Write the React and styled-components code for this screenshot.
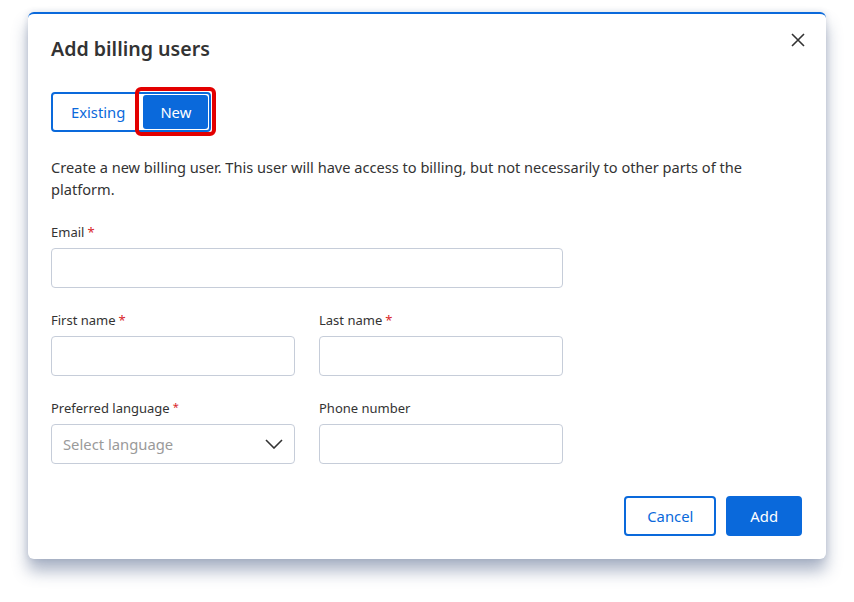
import React from "react";
import styled, { createGlobalStyle } from "styled-components";

const Global = createGlobalStyle`
  html, body { margin: 0; padding: 0; background: #ffffff; }
  body { font-family: "Noto Sans", "Open Sans", sans-serif; color: #333333; }
  * { box-sizing: border-box; }
`;

const BLUE = "#0a69db";

const Page = styled.div`
  padding: 12px 28px 40px 28px;
`;

const Modal = styled.div`
  position: relative;
  width: 798px;
  background: #fff;
  border-top: 2px solid ${BLUE};
  border-radius: 6px;
  box-shadow: 0 12px 16px rgba(70, 90, 130, 0.45), 0 0 6px rgba(70, 90, 130, 0.18);
  padding: 20px 24px 23px 23px;
  display: flex;
  flex-direction: column;
`;

const Title = styled.h2`
  margin: 0;
  font-size: 19.6px;
  line-height: 30px;
  font-weight: 600;
  color: #333;
`;

const CloseButton = styled.button`
  position: absolute;
  top: 17px;
  right: 19px;
  width: 18px;
  height: 18px;
  padding: 0;
  border: none;
  background: none;
  display: flex;
  align-items: center;
  justify-content: center;
`;

const ToggleGroup = styled.div`
  margin-top: 28px;
  align-self: flex-start;
  display: flex;
  padding: 1px;
  border: 2px solid ${BLUE};
  border-radius: 4px;
`;

const ToggleButton = styled.button`
  position: relative;
  height: 34px;
  padding: 0 17px;
  margin-left: ${(p) => (p.$active ? 1 : 0)}px;
  border: none;
  border-radius: 3px;
  background: ${(p) => (p.$active ? BLUE : "#fff")};
  color: ${(p) => (p.$active ? "#fff" : BLUE)};
  font-family: inherit;
  font-size: 14.8px;
  ${(p) =>
    p.$focused &&
    `
    &::after {
      content: "";
      position: absolute;
      inset: -8px -8px -7px -8px;
      border: 4px solid #e30000;
      border-radius: 6px;
    }
  `}
`;

const Description = styled.p`
  margin: 24px 0 0 0;
  font-size: 14.6px;
  line-height: 22px;
  color: #333;
  max-width: 752px;
`;

const FormGrid = styled.div`
  margin-top: 22px;
  width: 512px;
  display: grid;
  grid-template-columns: 244px 244px;
  column-gap: 24px;
  row-gap: 22px;
`;

const Field = styled.div`
  display: flex;
  flex-direction: column;
  grid-column: ${(p) => (p.$full ? "1 / span 2" : "auto")};
`;

const Label = styled.label`
  font-size: 13px;
  line-height: 20px;
  height: 20px;
  color: #333;
  margin-bottom: 6px;
`;

const Req = styled.span`
  color: #d9252b;
  font-size: ${(p) => (p.$small ? "11px" : "13px")};
  line-height: 0;
  position: relative;
  top: ${(p) => (p.$small ? "-2px" : "0")};
  margin-left: 3px;
`;

const Input = styled.input`
  height: 40px;
  width: 100%;
  border: 1px solid #c6cdd9;
  border-radius: 4px;
  padding: 0 12px;
  font-family: inherit;
  font-size: 15px;
  background: #fff;
`;

const SelectBox = styled.div`
  height: 40px;
  border: 1px solid #c6cdd9;
  border-radius: 4px;
  padding: 0 11px 0 11px;
  display: flex;
  align-items: center;
  justify-content: space-between;
  font-size: 14.8px;
  color: #9a9a9a;
`;

const Footer = styled.div`
  margin-top: 32px;
  display: flex;
  justify-content: flex-end;
  gap: 10px;
`;

const ActionButton = styled.button`
  height: 40px;
  padding: 0 ${(p) => (p.$primary ? 22 : 21)}px;
  border-radius: 4px;
  border: 2px solid ${BLUE};
  background: ${(p) => (p.$primary ? BLUE : "#fff")};
  color: ${(p) => (p.$primary ? "#fff" : BLUE)};
  font-family: inherit;
  font-size: 14.8px;
`;

export default function App() {
  return (
    <Page>
      <Global />
      <Modal>
        <Title>Add billing users</Title>
        <CloseButton aria-label="Close">
          <svg width="14" height="14" viewBox="0 0 14 14">
            <path d="M1 1 L13 13 M13 1 L1 13" stroke="#333" strokeWidth="1.6" fill="none" />
          </svg>
        </CloseButton>
        <ToggleGroup>
          <ToggleButton>Existing</ToggleButton>
          <ToggleButton $active $focused>New</ToggleButton>
        </ToggleGroup>
        <Description>
          Create a new billing user. This user will have access to billing, but not necessarily to other parts of the platform.
        </Description>
        <FormGrid>
          <Field $full>
            <Label>Email<Req>*</Req></Label>
            <Input type="text" />
          </Field>
          <Field>
            <Label>First name<Req>*</Req></Label>
            <Input type="text" />
          </Field>
          <Field>
            <Label>Last name<Req>*</Req></Label>
            <Input type="text" />
          </Field>
          <Field>
            <Label>Preferred language<Req $small>*</Req></Label>
            <SelectBox>
              <span>Select language</span>
              <svg width="18" height="10" viewBox="0 0 18 10">
                <path d="M1 1 L9 9 L17 1" stroke="#333" strokeWidth="1.6" fill="none" />
              </svg>
            </SelectBox>
          </Field>
          <Field>
            <Label>Phone number</Label>
            <Input type="text" />
          </Field>
        </FormGrid>
        <Footer>
          <ActionButton>Cancel</ActionButton>
          <ActionButton $primary>Add</ActionButton>
        </Footer>
      </Modal>
    </Page>
  );
}
